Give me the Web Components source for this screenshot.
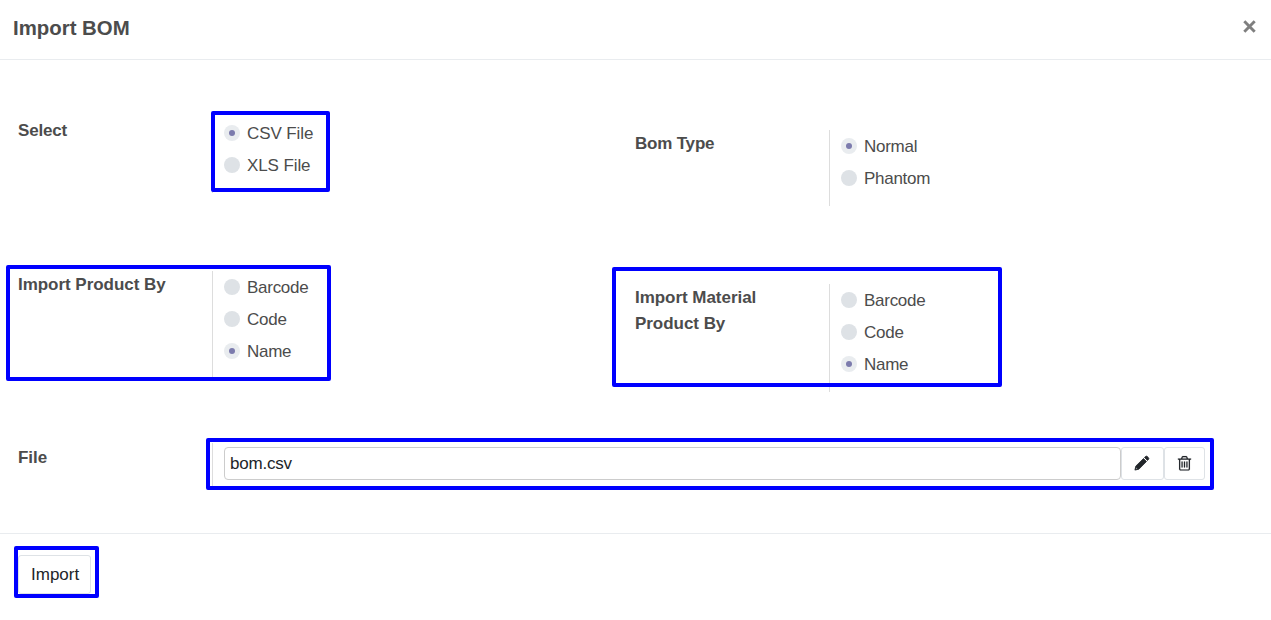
<!DOCTYPE html>
<html lang="en">
<head>
<meta charset="utf-8">
<title>Import BOM</title>
<style>
html,body{margin:0;height:100%;overflow:hidden;background:#fff}
body{font-family:"Liberation Sans",Arial,sans-serif;font-size:17px;color:#4c4c4c}
</style>
</head>
<body>
<bom-dialog></bom-dialog>
<script>
class BaseElement extends HTMLElement{
  render(html){this.attachShadow({mode:'open'}).innerHTML=html;}
}

// Blue outline laid over the content it highlights; offsets come from the host's style.
customElements.define('mark-frame',class extends BaseElement{
  connectedCallback(){this.render(`<style>:host{position:absolute;box-sizing:border-box;border:4px solid #00f;border-radius:2px;pointer-events:none;z-index:2}</style>`);}
});

customElements.define('radio-option',class extends BaseElement{
  connectedCallback(){this.render(`<style>
    :host{display:flex;align-items:center;height:32px;gap:7px;line-height:30px;white-space:nowrap;letter-spacing:var(--option-spacing,-.27px)}
    i{width:16px;height:16px;border-radius:50%;background:#dee2e6;display:grid;place-items:center;flex:none}
    span{padding-top:2px}
    :host([checked]) i{background:#e9ecef}
    :host([checked]) i::after{content:"";width:6px;height:6px;border-radius:50%;background:#7c7bad}
    </style><i></i><span><slot></slot></span>`);}
});

customElements.define('form-field',class extends BaseElement{
  connectedCallback(){this.render(`<style>
    :host{display:grid;grid-template-columns:194px 1fr;position:relative}
    .label{font-weight:700;line-height:26px;padding:var(--label-top,1px) 40px 0 0;letter-spacing:var(--label-spacing,-.04px)}
    .value{border-left:1px solid #ddd;padding:0 0 var(--value-bottom,12px) 11px;min-width:0}
    </style><div class="label">${this.getAttribute('label')}</div><div class="value"><slot></slot></div><slot name="mark"></slot>`);}
});

customElements.define('icon-button',class extends BaseElement{
  connectedCallback(){
    const icons={
      edit:'<svg viewBox="0 0 16 16"><path fill-rule="evenodd" d="M.9 15.100L1.800 11.100 9.500 3.500 12.500 6.500 4.900 14.200zM2.200 12.400L3.600 13.800 2.600 14.100 1.900 13.400z"/><path d="M10.500 2.500l1-1q.9-.8 1.800 0l1.200 1.200q.8.900 0 1.800l-1 1z"/></svg>',
      trash:'<svg viewBox="0 20 1792 1792"><path fill-rule="evenodd" d="M704 736v576q0 14-9 23t-23 9h-64q-14 0-23-9t-9-23V736q0-14 9-23t23-9h64q14 0 23 9t9 23zm256 0v576q0 14-9 23t-23 9h-64q-14 0-23-9t-9-23V736q0-14 9-23t23-9h64q14 0 23 9t9 23zm256 0v576q0 14-9 23t-23 9h-64q-14 0-23-9t-9-23V736q0-14 9-23t23-9h64q14 0 23 9t9 23zm128 724V512H448v948q0 22 7 40.500t14.500 27 10.500 8.500h832q3 0 10.500-8.500t14.500-27 7-40.500zM672 384h448l-48-117q-7-9-17-11H738q-10 2-17 11zm928 32v64q0 14-9 23t-23 9h-96v948q0 83-47 143.500t-113 60.500H480q-66 0-113-58.500T320 1464V512h-96q-14 0-23-9t-9-23v-64q0-14 9-23t23-9h309l70-167q15-37 54-63t79-26h320q40 0 79 26t54 63l70 167h309q14 0 23 9t9 23z"/></svg>'
    };
    this.render(`<style>
    :host{display:flex;box-sizing:border-box;height:33px;border:1px solid #dee2e6;border-radius:3px;align-items:center;justify-content:center;flex:none}
    svg{display:block;width:17px;height:17px;fill:#212529}
    :host([icon=edit]) svg{width:16px;height:16px;margin:0 1px 1px 0;stroke:#212529;stroke-width:.75}
    :host([icon=trash]) svg{stroke:#212529;stroke-width:10}
    </style>${icons[this.getAttribute('icon')]}`);}
});

customElements.define('file-input',class extends BaseElement{
  connectedCallback(){this.render(`<style>
    :host{display:flex;padding-top:4px}
    .name{box-sizing:border-box;height:33px;flex:1;border:1px solid #ccc;border-radius:4px;padding-left:5px;line-height:32px;color:#212529;letter-spacing:-.2px}
    icon-button:first-of-type{width:43px}
    icon-button:last-of-type{width:41px}
    </style><div class="name"><slot></slot></div><icon-button icon="edit"></icon-button><icon-button icon="trash"></icon-button>`);}
});

customElements.define('dialog-header',class extends BaseElement{
  connectedCallback(){this.render(`<style>
    :host{display:flex;box-sizing:border-box;height:60px;border-bottom:1px solid #e9ecef;padding:0 15px 4px 13px;align-items:center;justify-content:space-between}
    .title{font-size:20.4px;font-weight:700;line-height:30px}
    svg{display:block;width:13px;height:13px;margin-top:-3px;stroke:#7f7f7f;stroke-width:2.9;fill:none}
    </style><div class="title"><slot></slot></div><svg viewBox="0 0 13 13"><path d="M1.300 1.300l10.400 10.400M11.700 1.300L1.300 11.700"/></svg>`);}
});

customElements.define('dialog-footer',class extends BaseElement{
  connectedCallback(){this.render(`<style>
    :host{display:flex;align-items:flex-start;position:relative;box-sizing:border-box;height:87px;border-top:1px solid #e9ecef;padding:21px 18px}
    .btn{box-sizing:border-box;width:73px;height:39px;border:1px solid #dee2e6;border-radius:3px;padding-left:12px;line-height:37px;color:#212529}
    </style><div class="btn"><slot></slot></div><mark-frame style="left:14px;top:12px;width:85px;height:52px"></mark-frame>`);}
});

customElements.define('bom-dialog',class extends BaseElement{
  connectedCallback(){this.render(`<style>
    :host{display:flex;flex-direction:column;height:620px;background:#fff}
    main{flex:1;padding:57px 66px 0 18px}
    .cols{display:grid;grid-template-columns:617px 1fr;align-items:start;margin-bottom:51px}
    .cols.first{margin-bottom:65px;--label-spacing:-.2px}
    .format{--option-spacing:-.1px}
    .lower{margin-top:13px}
    .file{height:43px;--label-top:2px;--value-bottom:6px}
    </style>
    <dialog-header>Import BOM</dialog-header>
    <main>
      <div class="cols first">
        <form-field class="format" label="Select">
          <radio-option checked>CSV File</radio-option><radio-option>XLS File</radio-option>
          <mark-frame slot="mark" style="left:193px;top:-6px;width:119px;height:81px"></mark-frame>
        </form-field>
        <form-field class="lower" label="Bom Type">
          <radio-option checked>Normal</radio-option><radio-option>Phantom</radio-option>
        </form-field>
      </div>
      <div class="cols">
        <form-field label="Import Product By">
          <radio-option>Barcode</radio-option><radio-option>Code</radio-option><radio-option checked>Name</radio-option>
          <mark-frame slot="mark" style="left:-12px;top:-6px;width:325px;height:116px"></mark-frame>
        </form-field>
        <form-field class="lower" label="Import Material Product By">
          <radio-option>Barcode</radio-option><radio-option>Code</radio-option><radio-option checked>Name</radio-option>
          <mark-frame slot="mark" style="left:-23px;top:-17px;width:390px;height:120px"></mark-frame>
        </form-field>
      </div>
      <form-field class="file" label="File">
        <file-input>bom.csv</file-input>
        <mark-frame slot="mark" style="left:188px;top:-5px;width:1008px;height:52px"></mark-frame>
      </form-field>
    </main>
    <dialog-footer>Import</dialog-footer>`);}
});
</script>
</body>
</html>
